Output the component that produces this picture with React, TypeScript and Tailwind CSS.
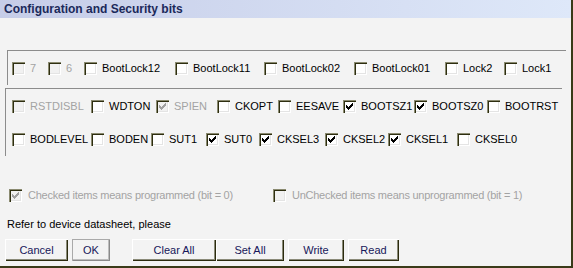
import type { ReactNode } from 'react'

type Bit = {
  label: string
  w: string
  checked?: boolean
  disabled?: boolean
}

const row1: Bit[] = [
  { label: '7', w: 'w-[36px]', disabled: true },
  { label: '6', w: 'w-[36px]', disabled: true },
  { label: 'BootLock12', w: 'w-[91px]' },
  { label: 'BootLock11', w: 'w-[89px]' },
  { label: 'BootLock02', w: 'w-[90px]' },
  { label: 'BootLock01', w: 'w-[91px]' },
  { label: 'Lock2', w: 'w-[59px]' },
  { label: 'Lock1', w: 'w-[56px]' },
]

const row2: Bit[] = [
  { label: 'RSTDISBL', w: 'w-[79px]', disabled: true },
  { label: 'WDTON', w: 'w-[65px]' },
  { label: 'SPIEN', w: 'w-[61px]', checked: true, disabled: true },
  { label: 'CKOPT', w: 'w-[61px]' },
  { label: 'EESAVE', w: 'w-[65px]' },
  { label: 'BOOTSZ1', w: 'w-[71px]', checked: true },
  { label: 'BOOTSZ0', w: 'w-[73px]', checked: true },
  { label: 'BOOTRST', w: 'w-[72px]' },
]

const row3: Bit[] = [
  { label: 'BODLEVEL', w: 'w-[79px]' },
  { label: 'BODEN', w: 'w-[60px]' },
  { label: 'SUT1', w: 'w-[55px]' },
  { label: 'SUT0', w: 'w-[53px]', checked: true },
  { label: 'CKSEL3', w: 'w-[66px]', checked: true },
  { label: 'CKSEL2', w: 'w-[63px]', checked: true },
  { label: 'CKSEL1', w: 'w-[69px]', checked: true },
  { label: 'CKSEL0', w: 'w-[60px]' },
]

function Check({ checked, disabled }: { checked?: boolean; disabled?: boolean }) {
  return (
    <span
      className={`relative block h-[13px] w-[13px] shrink-0 shadow-[inset_1px_1px_0_#8a8a70,inset_2px_2px_0_#2e2e10,inset_-1px_-1px_0_#ffffff,inset_-2px_-2px_0_#e4e4e4] ${
        disabled ? 'bg-[#f1f1f1]' : 'bg-white'
      }`}
    >
      {checked && (
        <svg
          className="absolute left-[3px] top-[3px]"
          width="7"
          height="7"
          viewBox="0 0 7 7"
          fill={disabled ? '#a0a0a0' : '#000000'}
        >
          <path d="M0 2h1v3H0z M1 3h1v3H1z M2 4h1v3H2z M3 3h1v3H3z M4 2h1v3H4z M5 1h1v3H5z M6 0h1v3H6z" />
        </svg>
      )}
    </span>
  )
}

function BitItem({ bit }: { bit: Bit }) {
  return (
    <div className={`flex items-center shrink-0 ${bit.w}`}>
      <Check checked={bit.checked} disabled={bit.disabled} />
      <span
        className={`ml-[5px] whitespace-nowrap leading-none ${
          bit.disabled ? 'text-[#a3a3a3]' : 'text-black'
        }`}
      >
        {bit.label}
      </span>
    </div>
  )
}

function Button({ children, w, ok }: { children: ReactNode; w: string; ok?: boolean }) {
  return (
    <button
      className={`flex h-[22px] items-center justify-center bg-[#f3f3f3] text-[11px] text-[#17175a] ${w} ${
        ok
          ? 'shadow-[inset_1px_1px_0_#a9a9a9,inset_-1px_-1px_0_#8a8a8a,inset_-2px_-2px_0_#bdbdbd]'
          : 'shadow-[inset_1px_1px_0_#ffffff,inset_-1px_-1px_0_#2b2b0e,inset_-2px_-2px_0_#8a8a78]'
      }`}
    >
      {children}
    </button>
  )
}

export default function App() {
  return (
    <main
      className="flex h-[268px] w-[573px] flex-col border-r-2 border-b-2 border-[#3a3a18] bg-[#f3f3f3] text-[11px]"
      style={{ fontFamily: '"Liberation Sans", Arial, sans-serif' }}
    >
      {/* Title */}
      <header className="flex h-[18px] items-center bg-gradient-to-r from-[#c6cde8] to-[#dee8f9] pl-[4px] text-[12px] font-bold text-[#1b295a]">
        Configuration and Security bits
      </header>

      {/* Lock bits */}
      <section className="ml-[7px] mt-[32px] flex h-[35px] w-[559px] items-center border-t border-l border-[#8c8c8c] border-r-white border-b-white pl-[4px]">
        {row1.map((b) => (
          <BitItem key={b.label} bit={b} />
        ))}
      </section>

      {/* Fuse bits */}
      <section className="ml-[5px] mt-[3px] flex h-[68px] w-[557px] flex-col justify-center gap-[20px] border-t border-l border-[#8c8c8c] border-r-white border-b-white pl-[6px]">
        <div className="flex items-center">
          {row2.map((b) => (
            <BitItem key={b.label} bit={b} />
          ))}
        </div>
        <div className="flex items-center">
          {row3.map((b) => (
            <BitItem key={b.label} bit={b} />
          ))}
        </div>
      </section>

      {/* Legend */}
      <div className="mt-[33px] flex items-center pl-[9px] text-[#a3a3a3] tracking-[-0.25px]">
        <div className="flex w-[264px] items-center">
          <Check checked disabled />
          <span className="ml-[6px] leading-none">Checked items means programmed (bit = 0)</span>
        </div>
        <div className="flex items-center">
          <Check disabled />
          <span className="ml-[6px] leading-none">UnChecked items means unprogrammed (bit = 1)</span>
        </div>
      </div>

      <p className="mt-[17px] pl-[7px] leading-none text-black">Refer to device datasheet, please</p>

      {/* Buttons */}
      <footer className="mt-[9px] flex pl-[5px]">
        <Button w="w-[63px]">Cancel</Button>
        <div className="ml-[4px]">
          <Button w="w-[38px]" ok>
            OK
          </Button>
        </div>
        <div className="ml-[22px]">
          <Button w="w-[84px]">Clear All</Button>
        </div>
        <Button w="w-[68px]">Set All</Button>
        <div className="ml-[4px]">
          <Button w="w-[56px]">Write</Button>
        </div>
        <div className="ml-[4px]">
          <Button w="w-[51px]">Read</Button>
        </div>
      </footer>
    </main>
  )
}
